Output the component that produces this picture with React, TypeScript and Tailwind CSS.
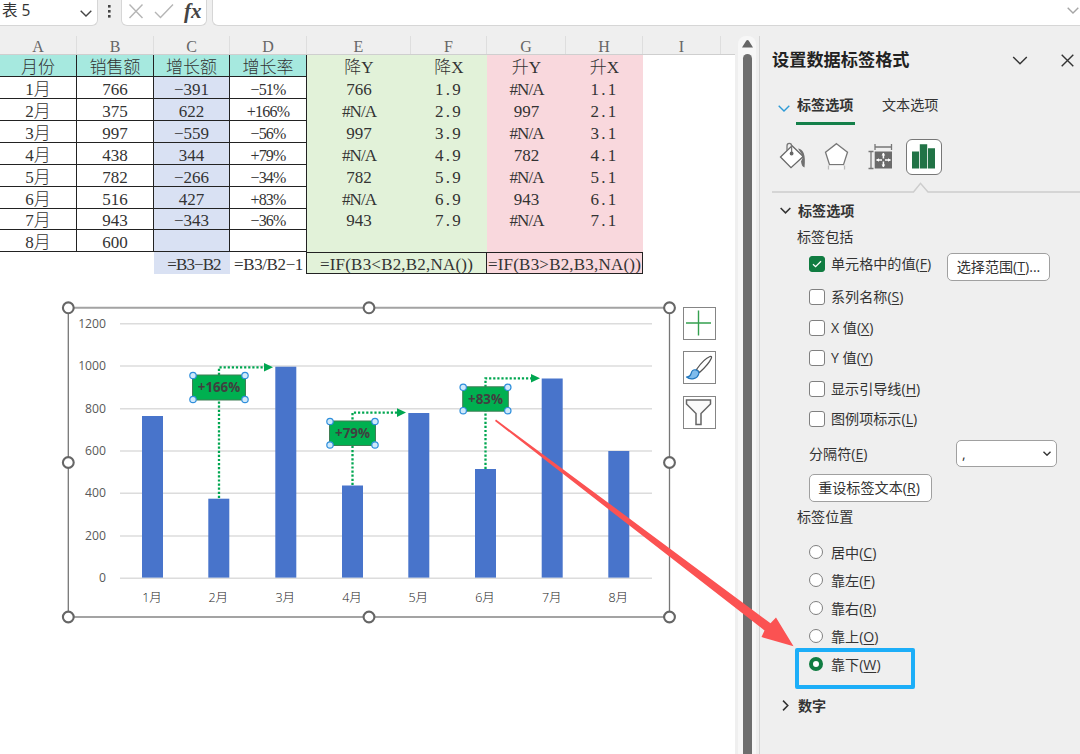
import { Fragment, useState } from "react";
import clsx from "clsx";

const columns = [
	{ name: "A", width: "w-[77px]" },
	{ name: "B", width: "w-[77px]" },
	{ name: "C", width: "w-[76px]" },
	{ name: "D", width: "w-[77px]" },
	{ name: "E", width: "w-[104px]" },
	{ name: "F", width: "w-[76px]" },
	{ name: "G", width: "w-[79px]" },
	{ name: "H", width: "w-[77px]" },
	{ name: "I", width: "w-[78px]" },
];

const titles = ["月份", "销售额", "增长额", "增长率", "降Y", "降X", "升Y", "升X"];

const rows = [
	["1月", "766", "−391", "−51%", "766", "1.9", "#N/A", "1.1"],
	["2月", "375", "622", "+166%", "#N/A", "2.9", "997", "2.1"],
	["3月", "997", "−559", "−56%", "997", "3.9", "#N/A", "3.1"],
	["4月", "438", "344", "+79%", "#N/A", "4.9", "782", "4.1"],
	["5月", "782", "−266", "−34%", "782", "5.9", "#N/A", "5.1"],
	["6月", "516", "427", "+83%", "#N/A", "6.9", "943", "6.1"],
	["7月", "943", "−343", "−36%", "943", "7.9", "#N/A", "7.1"],
	["8月", "600", "", "", "", "", "", ""],
];

const bars = [
	{ x: 142, top: 416, label: "1月" },
	{ x: 208.3, top: 498.7, label: "2月" },
	{ x: 275.3, top: 366.7, label: "3月" },
	{ x: 342, top: 485.5, label: "4月" },
	{ x: 408.3, top: 413, label: "5月" },
	{ x: 475, top: 469, label: "6月" },
	{ x: 541.7, top: 378.5, label: "7月" },
	{ x: 608.3, top: 451, label: "8月" },
];

const axis = [
	{ value: 1200, y: 323.7 },
	{ value: 1000, y: 366 },
	{ value: 800, y: 408.7 },
	{ value: 600, y: 451 },
	{ value: 400, y: 493.3 },
	{ value: 200, y: 536 },
	{ value: 0, y: 578.3 },
];

const growth = [
	{ x: 219, bottom: 498, top: 367.3, end: 265, box: [192.5, 375, 53, 25], text: "+166%" },
	{ x: 352.5, bottom: 485, top: 412.6, end: 398, box: [329.5, 421, 46, 24.5], text: "+79%" },
	{ x: 485.5, bottom: 469, top: 378.3, end: 532, box: [462.7, 386.8, 45.6, 24.4], text: "+83%" },
];

const handles = [
	[68.3, 307.8],
	[369, 307.8],
	[669.5, 307.8],
	[68.3, 462.5],
	[669.5, 462.5],
	[68.3, 617],
	[369, 617],
	[669.5, 617],
];

const includes = [
	{ text: "单元格中的值", hotkey: "F" },
	{ text: "系列名称", hotkey: "S" },
	{ text: "X 值", hotkey: "X" },
	{ text: "Y 值", hotkey: "Y" },
	{ text: "显示引导线", hotkey: "H" },
	{ text: "图例项标示", hotkey: "L" },
];

const positions = [
	{ text: "居中", hotkey: "C" },
	{ text: "靠左", hotkey: "F" },
	{ text: "靠右", hotkey: "R" },
	{ text: "靠上", hotkey: "O" },
	{ text: "靠下", hotkey: "W" },
];

// keeps every sheet character close to a half-width cell
function spacing(text: string) {
	if (text.includes("#")) return "tracking-[-0.9px]";
	if (text.includes("%")) return "text-[16px] tracking-[-0.8px]";
	if (text.includes(".")) return "tracking-[2.2px]";
	return "";
}

function Hotkey({ text, hotkey, after }: { text: string; hotkey: string; after?: string }) {
	return (
		<span className="whitespace-nowrap">
			{text}(<u className="underline-offset-2">{hotkey}</u>){after}
		</span>
	);
}

function Chevron({ className, strokeWidth = 1.4 }: { className?: string; strokeWidth?: number }) {
	return (
		<svg className={className} viewBox="0 0 12 7" fill="none" stroke="currentColor" strokeWidth={strokeWidth}>
			<path d="M.7.8 6 6 11.300.8" />
		</svg>
	);
}

function FormulaBar() {
	return (
		<div className="flex h-9 items-start">
			<div className="flex h-[26px] w-[98px] items-center justify-between rounded-br-md border-r border-b border-[#d6d6d6] bg-white pr-[5px] pb-[3px] pl-[2px] text-[15.500px]">
				<span className="font-['Open_Sans','Noto_Sans_CJK_SC',sans-serif]">表 5</span>
				<Chevron className="mt-1 h-[7px] w-3 text-[#444]" />
			</div>
			<svg className="h-[26px] w-[23px]" viewBox="98 0 23 26" fill="#444">
				<rect x="108" y="5" width="2.600" height="2.600" />
				<rect x="108" y="10" width="2.600" height="2.600" />
				<rect x="108" y="15" width="2.600" height="2.600" />
			</svg>
			<div className="flex h-[26px] w-[86px] rounded-b-md border-x border-b border-[#d6d6d6] bg-white">
				<svg className="h-[25px] w-[58px]" viewBox="122 0 58 25" fill="none" stroke="#b5b5b5" strokeWidth="1.4">
					<path d="M129.500 4.500 142.500 18M142.500 4.500 129.500 18M155 12l5.500 5.500L173 4.500" />
				</svg>
				<span className="pl-1 font-['Liberation_Serif',serif] text-[21px] leading-[22px] font-bold text-[#444] italic">fx</span>
			</div>
			<div className="ml-[5px] flex h-[26px] flex-1 justify-end rounded-bl-md border-b border-l border-[#d6d6d6] bg-white pt-[7px] pr-[1px]">
				<Chevron className="h-[7px] w-3 text-[#a5a5a5]" />
			</div>
		</div>
	);
}

function Sheet() {
	return (
		<div className="font-['Liberation_Serif','Noto_Sans_CJK_SC',serif] text-[17px] leading-[25px] text-[#333]">
			<div className="flex h-[19px] border-b border-[#cfcfcf] text-[#666]">
				{columns.map((column) => (
					<div key={column.name} className={clsx("border-r border-[#dedede] text-center text-[16px] leading-[21px]", column.width)}>
						{column.name}
					</div>
				))}
			</div>
			<div className="grid w-[643px] grid-cols-[77px_77px_76px_77px_104px_76px_79px_77px] grid-rows-[22px_22px_22px_22px_22px_22px_22px_21px_22px_22px] text-center whitespace-nowrap">
				{titles.map((title, index) => (
					<div
						key={title}
						className={clsx(
							"leading-[26px] font-light",
							index < 4 && "border-r border-b border-[#222] bg-[#a6e9df]",
							(index === 4 || index === 5) && "bg-[#e2f2d9]",
							index > 5 && "bg-[#f9d8dd]",
						)}>
						{title}
					</div>
				))}
				{rows.map((row, r) => (
					<Fragment key={r}>
						{row.map((cell, c) => (
							<div
								key={c}
								className={clsx(
									"font-light",
									r === 6 && "leading-[23px]",
									c < 4 && "border-r border-b border-[#222]",
									c < 4 && c !== 2 && "bg-white",
									c === 2 && "bg-[#d9e1f3]",
									(c === 4 || c === 5) && "bg-[#e2f2d9]",
									c > 5 && "bg-[#f9d8dd]",
									spacing(cell),
								)}>
								{cell}
							</div>
						))}
					</Fragment>
				))}
				<div className="col-span-2"></div>
				<div className="bg-[#d9e1f3] pl-1 tracking-[-0.9px]">=B3−B2</div>
				<div className="tracking-[-0.4px]">=B3/B2−1</div>
				<div className="col-span-2 -ml-px border border-[#222] bg-[#e2f2d9] leading-[23px] tracking-[0.2px]">=IF(B3&lt;B2,B2,NA())</div>
				<div className="col-span-2 border border-l-0 border-[#222] bg-[#f9d8dd] leading-[23px] tracking-[0.2px]">=IF(B3&gt;B2,B3,NA())</div>
			</div>
			<div className="flex pt-[26px] pl-[60px]">
				<Chart />
				<ChartButtons />
			</div>
		</div>
	);
}

function Chart() {
	return (
		<svg className="h-[326px] w-[619px]" viewBox="60 300 619 326" fontFamily="'Open Sans', 'Noto Sans CJK SC', sans-serif">
			<path d="M68.300 307.800H669.500M68.300 617H669.500" stroke="#a3a3a3" strokeWidth="2" />
			<path d="M68.300 307.800V617M669.500 307.800V617" stroke="#777" strokeWidth="1.300" />
			{axis.map((tick) => (
				<g key={tick.value}>
					<path d={`M120 ${tick.y}H652`} stroke="#dcdcdc" strokeWidth="1.600" />
					<text x="106" y={tick.y + 4} textAnchor="end" fontSize="12.200" fill="#595959">
						{tick.value}
					</text>
				</g>
			))}
			{bars.map((bar) => (
				<g key={bar.label}>
					<rect x={bar.x} y={bar.top} width="21" height={577.6 - bar.top} fill="#4874cb" />
					<text x={bar.x + 10} y="601.500" textAnchor="middle" fontSize="12.500" fontWeight="300" fill="#222">
						{bar.label}
					</text>
				</g>
			))}
			{growth.map(({ x, bottom, top, end, box, text }) => {
				const [left, y, width, height] = box as number[];
				return (
					<g key={text}>
						<path d={`M${x} ${bottom}V${top}H${end}`} fill="none" stroke="#00a650" strokeWidth="2.300" strokeDasharray="2.200 1.900" />
						<path d={`M${end - 1} ${top - 4.3}l9 4.300-9 4.300z`} fill="#00a650" />
						<rect x={left} y={y} width={width} height={height} fill="#00b050" stroke="#3f7f55" />
						<text x={x} y={y + height / 2 + 4.8} textAnchor="middle" fontSize="13.300" fontWeight="700" fill="#404040">
							{text}
						</text>
						{[left + 0.5, left + width - 0.5].map((cx) => (
							<Fragment key={cx}>
								<circle cx={cx} cy={y + 0.5} r="3.200" fill="#cfe9fb" stroke="#2f8fdc" strokeWidth="1.200" />
								<circle cx={cx} cy={y + height - 0.5} r="3.200" fill="#cfe9fb" stroke="#2f8fdc" strokeWidth="1.200" />
							</Fragment>
						))}
					</g>
				);
			})}
			{handles.map(([x, y]) => (
				<circle key={`${x}-${y}`} cx={x} cy={y} r="5.400" fill="#fff" stroke="#666" strokeWidth="2.100" />
			))}
		</svg>
	);
}

function ChartButtons() {
	return (
		<div className="flex flex-col gap-[11.400px] pt-[7px] pl-1">
			<button type="button" className="h-[33px] w-[33px] border border-[#858585] bg-white">
				<svg viewBox="0 0 31 31" className="h-[31px] w-[31px]" stroke="#35a04f" strokeWidth="1.400">
					<path d="M14.500 2.500v25M2 15h25" />
				</svg>
			</button>
			<button type="button" className="h-[33px] w-[33px] border border-[#858585] bg-white">
				<svg viewBox="0 0 31 31" className="h-[31px] w-[31px]" fill="none" strokeLinejoin="round">
					<path d="M12.500 17.500C17 11 22 6 26 4.500c1.500-.500 1.800.300 1.300 1.700C25.500 10.500 21 15.500 15.500 20.500z" stroke="#555" strokeWidth="1.300" />
					<path d="M2.500 25c3 0 4-1.200 4.600-3.500.700-2.700 2.300-4 4.500-3.700 2.700.400 3.800 2.300 3 4.600C13.400 26.500 7 28.700 2.500 25z" fill="#7fbcec" stroke="#2277bd" strokeWidth="1.200" />
				</svg>
			</button>
			<button type="button" className="h-[33px] w-[33px] border border-[#858585] bg-white">
				<svg viewBox="0 0 31 31" className="h-[31px] w-[31px]" fill="#fafafa" stroke="#666" strokeWidth="1.500">
					<path d="M2.500 3h24v4l-9.500 9.500v11h-5v-11L2.500 7z" />
				</svg>
			</button>
		</div>
	);
}

function FormatPanel() {
	const [position, setPosition] = useState("W");
	const [checked, setChecked] = useState(["F"]);

	return (
		<aside className="h-[718px] flex-1 border-l border-[#d4d4d4] pl-3 text-[14.100px] leading-[18px] text-[#333]">
			<div className="flex h-12 items-center text-[#222]">
				<h1 className="w-[240px] text-[17.200px] font-bold">设置数据标签格式</h1>
				<Chevron className="h-[9px] w-4 text-[#333]" strokeWidth={1.1} />
				<svg className="ml-[33px] h-[13px] w-[13px]" viewBox="0 0 13 13" stroke="#333" strokeWidth="1.400">
					<path d="M.700.700l11.600 11.600M12.300.700.700 12.300" />
				</svg>
			</div>
			<div className="flex h-[41px] pl-[6px]">
				<Chevron className="mt-[21px] mr-[6px] h-[7px] w-3 text-[#2e9bd6]" />
				<div className="flex w-[59px] items-center border-b-[3px] border-[#14804a] pt-1 pl-px font-bold">标签选项</div>
				<div className="ml-[27px] flex items-center pt-1 pb-[3px]">文本选项</div>
			</div>
			<div className="flex h-[57px] items-start pt-[14px] pl-[6px]">
				<svg className="h-9 w-[128px]" viewBox="778 139 128 36" fill="none" stroke="#666" strokeWidth="1.300">
					<path d="M792 145.800 803.200 156.500 791 167.700 780.500 157z" fill="#fff" />
					<path d="M787 151v-5c0-3.500 4.600-3.500 4.600 0v7" stroke="#777" />
					<circle cx="791.600" cy="153.500" r="1.300" fill="#666" />
					<path d="M798 148.500c5.500.5 8 6.500 6.500 19-2-.500-3-2.500-3.500-6l2.200-5z" fill="#707070" stroke="none" />
					<path d="M836.500 143.700 847.500 152.300 843.500 164.700h-14L825.500 152.300z" fill="#fff" stroke="#777" />
					<path d="M828.500 165.500v4M844.500 165.500v4" stroke="#bbb" />
					<path d="M829.500 165.500h14v4h-14z" fill="#f8f8f8" stroke="none" />
					<path d="M875 144v6M891.500 144v6M875 147h16.500M868.500 151.500h5M868.500 168.500h5M871 151.500v17" stroke="#777" />
					<path d="M874.700 151.500h17.300v17h-17.300z" fill="#6b6b6b" stroke="none" />
					<path d="M883.400 153v5.500M883.400 161.500v5.500M876.500 160h5.500M885 160h5.500" stroke="#fff" strokeWidth="1.500" />
					<path d="M881.600 155.500l1.800-2.700 1.800 2.700zM881.600 164.500l1.800 2.700 1.800-2.700zM879 158.200l-2.700 1.800 2.700 1.800zM888 158.200l2.700 1.800-2.700 1.800z" fill="#fff" stroke="none" />
				</svg>
				<button type="button" className="h-9 w-9 rounded-md border border-[#777] bg-white">
					<svg className="h-[34px] w-[34px]" viewBox="907 140 34 34" fill="#217346">
						<path d="M912 151.500h7v17h-7zM919.800 144.300h7.400v24.200h-7.400zM928 148.300h7v20.200h-7z" />
					</svg>
				</button>
			</div>
			<svg className="h-3 w-[308px]" viewBox="772 182 308 12" fill="none" stroke="#cdcdcd" strokeWidth="1.500">
				<path d="M772 192h141.500l7-8.700 7.500 8.700H1080" />
			</svg>
			<div className="flex h-[33px] items-center pl-[8px] font-bold">
				<Chevron className="mr-[7px] h-[7px] w-[11px]" strokeWidth={1.7} />
				标签选项
			</div>
			<div className="pt-px pl-[25px]">标签包括</div>
			<div className="pl-[37px]">
				{includes.map(({ text, hotkey }, index) => {
					const isChecked = checked.includes(hotkey);
					return (
						<div key={hotkey} className={clsx("flex items-center", index === 0 ? "h-9" : "h-[30.500px]")}>
							<button
								type="button"
								className={clsx(
									"mr-[6px] flex h-4 w-4 items-center justify-center rounded-[3px] border",
									isChecked ? "border-[#107c41] bg-[#107c41]" : "border-[#808080] bg-white",
								)}
								onClick={() => {
									setChecked(isChecked ? checked.filter((key) => key !== hotkey) : [...checked, hotkey]);
								}}>
								{isChecked && (
									<svg className="h-2 w-[10px]" viewBox="0 0 10 8" fill="none" stroke="#fff" strokeWidth="1.300">
										<path d="M1 4.200l2.600 2.500L9 1.200" />
									</svg>
								)}
							</button>
							<Hotkey text={text} hotkey={hotkey} />
							{index === 0 && (
								<button type="button" className="mt-[6px] mr-[30px] ml-auto h-7 w-[103px] rounded-[5px] border border-[#a0a0a0] bg-white">
									<Hotkey text="选择范围" hotkey="T" after="..." />
								</button>
							)}
						</div>
					);
				})}
				<div className="flex h-[38px] items-center justify-between pr-[23px]">
					<Hotkey text="分隔符" hotkey="E" />
					<div className="flex h-[27px] w-[101px] items-center justify-between rounded-[5px] border border-[#a0a0a0] bg-white px-[5px]">
						<span>,</span>
						<Chevron className="h-[5px] w-2" strokeWidth={2.2} />
					</div>
				</div>
				<button type="button" className="mt-px block h-7 w-[123px] rounded-[5px] border border-[#a0a0a0] bg-white pr-[3px]">
					<Hotkey text="重设标签文本" hotkey="R" />
				</button>
			</div>
			<div className="flex h-8 items-center pb-px pl-[25px]">标签位置</div>
			<div className="pt-[5px] pl-[37px]">
				{positions.map(({ text, hotkey }) => (
					<div key={hotkey} className="flex h-7 items-center">
						<button
							type="button"
							className={clsx("mr-2 mb-[2px] h-[14px] w-[14px] rounded-full bg-white", position === hotkey ? "border-4 border-[#107c41]" : "border border-[#808080]")}
							onClick={() => {
								setPosition(hotkey);
							}}></button>
						<Hotkey text={text} hotkey={hotkey} />
					</div>
				))}
			</div>
			<div className="mt-[10px] flex h-[34px] items-center pl-[8px] font-bold">
				<Chevron className="mr-[7px] h-[7px] w-[11px] -rotate-90" strokeWidth={1.7} />
				数字
			</div>
		</aside>
	);
}

function App() {
	return (
		<div className="relative h-[754px] w-[1080px] overflow-hidden bg-[#efefef] font-['Open_Sans','Noto_Sans_CJK_SC',sans-serif] text-[#333]">
			<FormulaBar />
			<div className="flex">
				<main className="h-[718px] w-[735px] bg-[linear-gradient(#efefef_19px,#fff_19px)]">
					<Sheet />
				</main>
				<div className="flex h-[718px] w-6 flex-col items-center">
					<div className="flex h-[718px] w-[18px] flex-col items-center rounded-t-lg bg-[#f7f7f7] pt-1">
						<svg className="h-[8px] w-[11px]" viewBox="0 0 11 8" fill="#666">
							<path d="M5.500 0q.800 0 1.300.800L11 7.500H0L4.200.800Q4.700 0 5.500 0z" />
						</svg>
						<div className="mt-[6px] w-[9px] flex-1 rounded-t-full bg-[#6e6e6e]"></div>
					</div>
				</div>
				<FormatPanel />
			</div>

			{/* annotation over the sheet and the panel */}
			<svg className="pointer-events-none absolute inset-0 h-[754px] w-[1080px]" viewBox="0 0 1080 754">
				<path d="M496 419.500 770.500 623.200 776 617.500 793.500 646.300 761.500 637 764.500 630.500 495 421z" fill="#fb5252" />
			</svg>
			<div className="pointer-events-none absolute top-[648px] left-[795px] h-[41px] w-[120px] rounded-[2px] border-[4.500px] border-[#1caef8]"></div>
		</div>
	);
}

export default App;
